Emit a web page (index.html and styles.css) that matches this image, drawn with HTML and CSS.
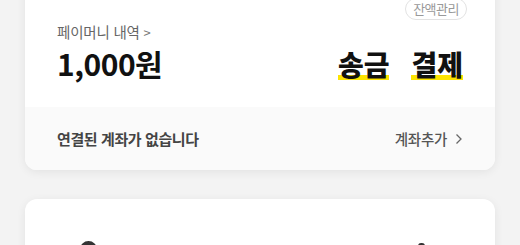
FILE: index.html
```html
<!DOCTYPE html>
<html lang="ko">
<head>
<meta charset="utf-8">
<link rel="stylesheet" href="styles.css">
</head>
<body>
<div class="page">
  <section class="card wallet">
    <div class="wallet-top">
      <div class="pill-row"><span class="pill">잔액관리</span></div>
      <div class="history">페이머니 내역 <span class="chev">&gt;</span></div>
      <div class="balance-row">
        <div class="amount">1,000원</div>
        <div class="actions">
          <span class="action">송금</span>
          <span class="action">결제</span>
        </div>
      </div>
    </div>
    <div class="wallet-bottom">
      <span class="no-account">연결된 계좌가 없습니다</span>
      <span class="add-account">계좌추가
        <svg class="chev-svg" width="8" height="12" viewBox="0 0 8 12"><path d="M1.5 1.5 L6 6 L1.5 10.5" fill="none" stroke="#666" stroke-width="1.3"/></svg>
      </span>
    </div>
  </section>
  <section class="card second">
    <div class="second-row">
      <span class="dot-icon"></span>
      <span class="small-icon"></span>
    </div>
  </section>
</div>
</body>
</html>
```
FILE: styles.css
```css
* { box-sizing: border-box; }
html, body { margin: 0; padding: 0; }
body {
  width: 520px;
  height: 245px;
  overflow: hidden;
  background: #f3f3f3;
  font-family: "Noto Sans CJK KR", "Noto Sans", sans-serif;
}
.page {
  padding: 0 25px;
  display: flex;
  flex-direction: column;
  gap: 29px;
}
.card {
  background: #fff;
  border-radius: 12px;
  box-shadow: 0 2px 10px rgba(0, 0, 0, 0.07);
  overflow: hidden;
}
.wallet { margin-top: -20px; }
.wallet-top {
  padding: 18px 32px 25px 32px;
  height: 127px;
}
.pill-row {
  display: flex;
  justify-content: flex-end;
  margin-right: -4px;
}
.pill {
  display: inline-flex;
  align-items: center;
  height: 22px;
  padding: 0 7px 1px 7px;
  border: 1px solid #e2e2e2;
  border-radius: 11px;
  font-size: 13px;
  line-height: 16px;
  color: #999;
  letter-spacing: -0.5px;
}
.history {
  margin-top: 2px;
  font-size: 14.5px;
  line-height: 19px;
  color: #666;
  letter-spacing: -0.2px;
}
.chev { font-size: 13px; color: #777; }
.balance-row {
  display: flex;
  justify-content: space-between;
  align-items: baseline;
  margin-top: 3px;
}
.amount {
  font-size: 30px;
  line-height: 36px;
  font-weight: 700;
  color: #111;
  letter-spacing: -0.5px;
}
.actions {
  display: flex;
  gap: 22px;
  align-items: baseline;
}
.action {
  display: inline-block;
  font-size: 28px;
  line-height: 32px;
  font-weight: 900;
  color: #111;
  background: linear-gradient(#fde400, #fde400) no-repeat left bottom / 100% 5px;
}
.wallet-bottom {
  height: 63px;
  background: #fafafa;
  padding: 0 32px 0 32px;
  display: flex;
  align-items: center;
  justify-content: space-between;
}
.no-account {
  font-size: 15px;
  font-weight: 700;
  color: #444;
  letter-spacing: -0.4px;
}
.add-account {
  display: flex;
  align-items: center;
  gap: 8px;
  font-size: 14.5px;
  color: #555;
  font-weight: 500;
  letter-spacing: -0.3px;
}
.second { height: 80px; }
.second-row {
  padding: 42px 70px 0 55px;
  display: flex;
  justify-content: space-between;
}
.dot-icon {
  width: 17px;
  height: 17px;
  border-radius: 50%;
  background: #333;
}
.small-icon {
  width: 7px;
  height: 12px;
  border-radius: 3px 3px 0 0;
  background: #333;
  margin-top: 2px;
}
```
